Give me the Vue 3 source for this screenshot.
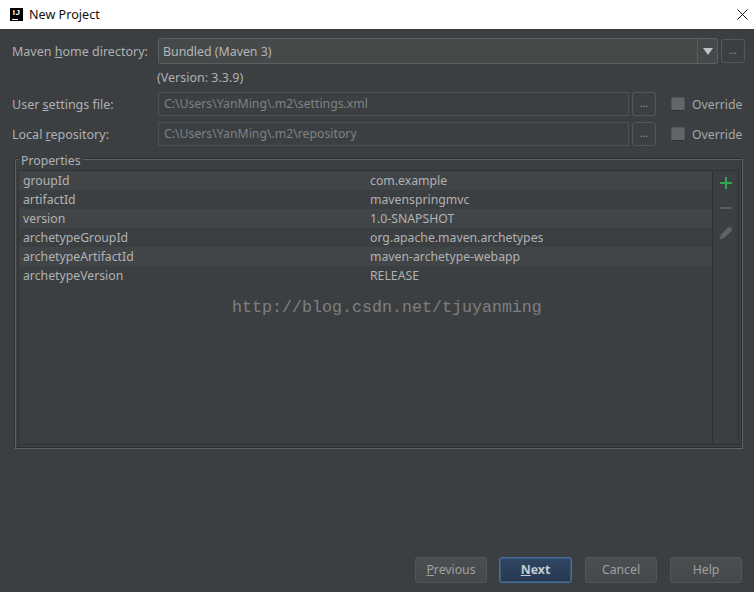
<script setup>
const rows = [
  ['groupId', 'com.example'],
  ['artifactId', 'mavenspringmvc'],
  ['version', '1.0-SNAPSHOT'],
  ['archetypeGroupId', 'org.apache.maven.archetypes'],
  ['archetypeArtifactId', 'maven-archetype-webapp'],
  ['archetypeVersion', 'RELEASE'],
]
</script>

<template>
  <div class="win">
    <header class="titlebar">
      <span class="logo"><b>IJ</b><i></i></span>
      <span class="title">New Project</span>
      <svg class="close" width="11" height="11" viewBox="0 0 11 11"><path d="M.5.5l10 10M10.500.5l-10 10" stroke="#111" fill="none" /></svg>
    </header>
    <main class="body">
      <div class="row home">
        <label class="lbl">Maven <u>h</u>ome directory:</label>
        <div class="combo">
          <span class="combo-text">Bundled (Maven 3)</span>
          <span class="arrow"><i></i></span>
        </div>
        <button class="dots">...</button>
      </div>
      <div class="version">(Version: 3.3.9)</div>
      <div class="row setting">
        <label class="lbl">User <u>s</u>ettings file:</label>
        <div class="field">C:\Users\YanMing\.m2\settings.xml</div>
        <button class="dots">...</button>
        <span class="check"></span>
        <span class="ovr">Override</span>
      </div>
      <div class="row setting">
        <label class="lbl">Local <u>r</u>epository:</label>
        <div class="field">C:\Users\YanMing\.m2\repository</div>
        <button class="dots">...</button>
        <span class="check"></span>
        <span class="ovr">Override</span>
      </div>
      <section class="group">
        <span class="legend">Properties</span>
        <div class="table">
          <div class="rows">
            <div v-for="r in rows" :key="r[0]" class="tr">
              <span class="k">{{ r[0] }}</span>
              <span class="v">{{ r[1] }}</span>
            </div>
            <div class="mark">http://blog.csdn.net/tjuyanming</div>
          </div>
          <div class="tools">
            <svg width="14" height="14" viewBox="0 0 14 14"><path d="M7 1v12M1 7h12" stroke="#2fa84f" stroke-width="2" /></svg>
            <svg width="14" height="14" viewBox="0 0 14 14"><path d="M1 7h12" stroke="#5a5d5f" stroke-width="2" /></svg>
            <svg width="14" height="14" viewBox="0 0 14 14"><path d="M.5 13.500L2 8.500 9 1.500a2.500 2.500 0 0 1 3.500 3.500L5.500 12z" fill="#606264" /></svg>
          </div>
        </div>
      </section>
      <footer class="footer">
        <button class="btn prev"><u>P</u>revious</button>
        <button class="btn next"><u>N</u>ext</button>
        <button class="btn cancel">Cancel</button>
        <button class="btn help">Help</button>
      </footer>
    </main>
  </div>
</template>

<style>
html, body { margin: 0; background: #3c3f41; }
</style>

<style scoped>
.win {
  width: 754px; height: 592px; display: flex; flex-direction: column;
  background: #3c3f41; color: #afb1b3;
  font: 12.25px/17px "Noto Sans", "Open Sans", sans-serif; overflow: hidden;
}
.titlebar {
  height: 29px; background: #fff; display: flex; align-items: center;
  padding: 0 6px 0 10px; color: #111;
}
.logo {
  width: 13px; height: 13px; background: #000; color: #fff; position: relative;
  font: bold 8px/10px "Liberation Sans", sans-serif; text-align: center; margin-right: 6px;
}
.logo b { display: block; letter-spacing: .5px; }
.logo i { position: absolute; left: 2px; bottom: 1px; width: 6px; height: 1px; background: #fff; }
.title { flex: 1; font-size: 12.6px; }
.body { flex: 1; position: relative; padding: 9px 9px 9px 12px; display: flex; flex-direction: column; }
.row { display: flex; align-items: center; }
.lbl { width: 146px; flex: none; font-size: 12.5px; }
.home { height: 26px; }
.combo {
  width: 560px; height: 26px; box-sizing: border-box; display: flex; justify-content: space-between;
  border: 1px solid #5c5e60; border-radius: 3px; background: #45494a; align-items: center;
  padding-left: 4px; color: #b4b6b8; flex: none;
}
.combo-text { font-size: 12.35px; }
.arrow {
  width: 20px; height: 24px; box-sizing: border-box; border-left: 1px solid #5c5e60;
  display: flex; align-items: center; justify-content: center;
}
.arrow i { border: 5px solid transparent; border-top: 7px solid #c0c2c4; border-bottom: 0; }
.dots {
  width: 24px; height: 24px; box-sizing: border-box; padding: 0 0 3px; margin-left: 3px; flex: none;
  background: #3c3f41; border: 1px solid #555759; border-radius: 3px; color: #9a9c9e; font: 10px/12px "Noto Sans", sans-serif;
}
.version { margin: 5px 0 0 145px; height: 17px; font-size: 12.5px; }
.setting { height: 24px; margin-top: 6px; }
.field {
  width: 471px; height: 24px; box-sizing: border-box; border: 1px solid #4e5052; padding: 1.500px 5px;
  color: #7f8183; flex: none;
}
.check {
  width: 14px; height: 14px; box-sizing: border-box; margin: 0 7px 0 15px; flex: none;
  background: #636567; border-radius: 2px; border: 1px solid #55575a; border-bottom-color: #2f3133;
}
.ovr { color: #a5a7a9; }
.group {
  position: relative; margin: 12px 0 0 2px; width: 729px; box-sizing: border-box; flex: none;
  border: 1px solid; border-color: #2c2e2f #5e6264 #5e6264 #2c2e2f;
  box-shadow: inset 1px 1px 0 #5e6264, inset -1px -1px 0 #2c2e2f;
  padding: 11px 3px 3px;
}
.legend { position: absolute; left: 4px; top: -6px; background: #3c3f41; padding: 0 2px; line-height: 15px; }
.table { display: flex; height: 275px; border: 1px solid #2f3132; box-sizing: border-box; }
.rows { flex: 1; position: relative; border-right: 1px solid #2f3132; }
.tr { height: 19px; display: flex; align-items: center; padding-left: 4px; color: #b0b2b4; }
.tr:nth-child(odd) { background: #424547; }
.k { width: 347px; }
.mark {
  position: absolute; left: 213px; top: 127px; font: 16.67px/20px "Liberation Mono", monospace; color: #7c7f81;
  white-space: nowrap;
}
.tools { width: 25px; display: flex; flex-direction: column; align-items: center; gap: 11px; padding-top: 5px; }
.footer { margin-top: auto; display: flex; height: 26px; padding-left: 403px; }
.btn {
  height: 26px; box-sizing: border-box; border: 1px solid #545658; border-radius: 3px; padding: 0 0 2px; flex: none;
  background: linear-gradient(#4b4e50, #46494b); color: #9fa1a3; font: 12.25px/17px "Noto Sans", sans-serif;
}
.prev { width: 72px; margin-right: 12px; }
.next {
  width: 73px; margin-right: 13px; font-weight: 700; color: #c2cad2;
  background: linear-gradient(#2f4763, #26384e); border-color: #46719c; box-shadow: inset 0 0 0 1px #375a7d;
}
.cancel { width: 72px; margin-right: 13px; }
.help { width: 72px; }
</style>
